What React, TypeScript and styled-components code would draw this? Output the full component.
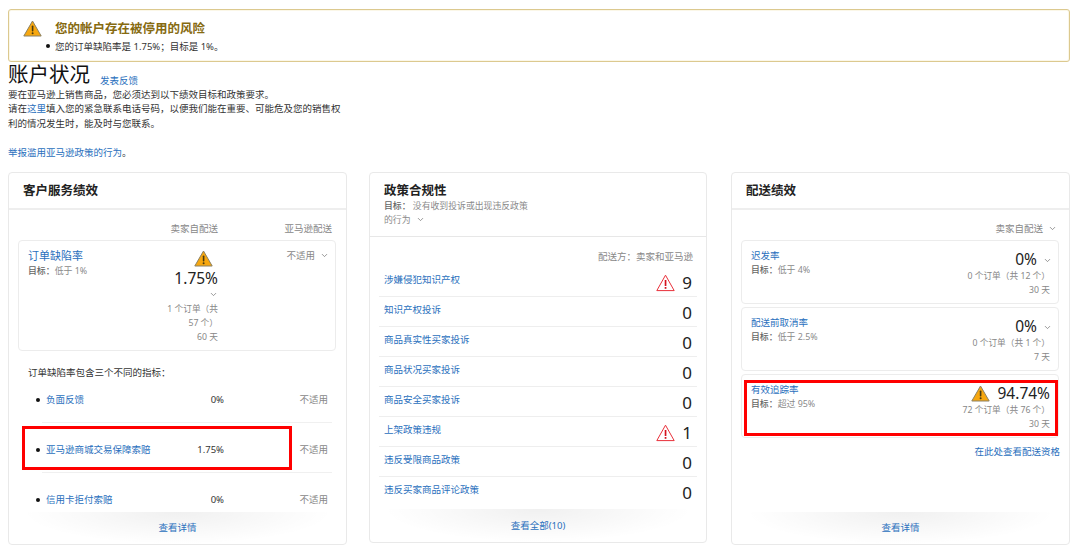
import { ChevronDown } from "lucide-react";
import styled, { createGlobalStyle } from "styled-components";

const GlobalStyle = createGlobalStyle`
  html, body {
    margin: 0;
    height: 545px;
    overflow: hidden;
    background: #fff;
  }
  body {
    font-family: "Noto Sans", "Noto Sans CJK SC", sans-serif;
    font-size: 9.5px;
    line-height: 14px;
    color: #333;
  }
  * {
    box-sizing: border-box;
  }
`;

function WarnIcon() {
  return (
    <svg width="19" height="17" viewBox="0 0 19 17">
      <path d="M9.5 1 L18.2 16 H0.8 Z" fill="#f7a70f" stroke="#8b8062" strokeWidth="1" strokeLinejoin="round" />
      <rect x="8.8" y="5.6" width="1.6" height="5.8" rx="0.7" fill="#4a3a10" />
      <circle cx="9.6" cy="13.3" r="1" fill="#4a3a10" />
    </svg>
  );
}

function AlertIcon() {
  return (
    <svg width="19" height="18" viewBox="0 0 19 18">
      <path d="M9.5 1.2 L18.2 16.6 H0.8 Z" fill="#fff" stroke="#e8303a" strokeWidth="1" strokeLinejoin="round" />
      <rect x="8.7" y="6" width="1.7" height="6" fill="#d5121e" />
      <rect x="8.7" y="13" width="1.7" height="1.8" fill="#d5121e" />
    </svg>
  );
}

const policies = [
  { name: "涉嫌侵犯知识产权", count: 9, alert: true },
  { name: "知识产权投诉", count: 0 },
  { name: "商品真实性买家投诉", count: 0 },
  { name: "商品状况买家投诉", count: 0 },
  { name: "商品安全买家投诉", count: 0 },
  { name: "上架政策违规", count: 1, alert: true },
  { name: "违反受限商品政策", count: 0 },
  { name: "违反买家商品评论政策", count: 0 },
];

const shipping = [
  { name: "迟发率", goal: "低于 4%", value: "0%", orders: "0 个订单\uFF08共 12 个\uFF09", days: "30 天" },
  { name: "配送前取消率", goal: "低于 2.5%", value: "0%", orders: "0 个订单\uFF08共 1 个\uFF09", days: "7 天" },
  { name: "有效追踪率", goal: "超过 95%", value: "94.74%", orders: "72 个订单\uFF08共 76 个\uFF09", days: "30 天", warn: true },
];

const metrics = [
  { name: "负面反馈", value: "0%" },
  { name: "亚马逊商城交易保障索赔", value: "1.75%", marked: true },
  { name: "信用卡拒付索赔", value: "0%" },
];

export default function App() {
  return (
    <Page>
      <GlobalStyle />
      <Banner>
        <BannerIcon>
          <WarnIcon />
        </BannerIcon>
        <div>
          <BannerTitle>您的帐户存在被停用的风险</BannerTitle>
          <BannerItem>您的订单缺陷率是 1.75%&#xFF1B;目标是 1%。</BannerItem>
        </div>
      </Banner>

      <TitleRow>
        <PageTitle>账户状况</PageTitle>
        <Link href="#">发表反馈</Link>
      </TitleRow>
      <Intro>
        要在亚马逊上销售商品&#xFF0C;您必须达到以下绩效目标和政策要求。
        <br />
        请在<Link href="#">这里</Link>填入您的紧急联系电话号码&#xFF0C;以便我们能在重要、可能危及您的销售权
        <br />
        利的情况发生时&#xFF0C;能及时与您联系。
      </Intro>
      <Report>
        <Link href="#">举报滥用亚马逊政策的行为</Link>。
      </Report>

      <Cards>
        <Card>
          <CardHead $thick>
            <CardTitle>客户服务绩效</CardTitle>
          </CardHead>
          <ServiceBody>
            <ColumnHeads>
              <span />
              <Muted>卖家自配送</Muted>
              <Muted>亚马逊配送</Muted>
            </ColumnHeads>
            <DefectBox>
              <div>
                <BigLink href="#">订单缺陷率</BigLink>
                <Goal>
                  <b>目标&#xFF1A;</b>低于 1%
                </Goal>
              </div>
              <DefectValue>
                <DefectIcon>
                  <WarnIcon />
                </DefectIcon>
                <Figure>1.75%</Figure>
                <DefectChevron>
                  <ChevronDown size={9} />
                </DefectChevron>
                <OrderLine>1 个订单&#xFF08;共</OrderLine>
                <OrderLine>57 个&#xFF09;</OrderLine>
                <OrderLine>60 天</OrderLine>
              </DefectValue>
              <DefectAmazon>
                <Muted>不适用</Muted>
                <ChevronDown size={9} />
              </DefectAmazon>
            </DefectBox>
            <ListIntro>订单缺陷率包含三个不同的指标&#xFF1A;</ListIntro>
            <MetricList>
              {metrics.map((m) => (
                <Metric key={m.name}>
                  <div>
                    <Dot />
                    <Link href="#">{m.name}</Link>
                  </div>
                  <RightText>{m.value}</RightText>
                  <Muted>不适用</Muted>
                  {m.marked && <MetricMark />}
                </Metric>
              ))}
            </MetricList>
          </ServiceBody>
          <CardFoot $tall>
            <Link href="#">查看详情</Link>
          </CardFoot>
        </Card>

        <PolicyCard>
          <CardHead>
            <CardTitle>政策合规性</CardTitle>
            <PolicyGoal>
              <b>目标&#xFF1A;</b>&nbsp;没有收到投诉或出现违反政策
              <br />
              的行为 <ChevronDown size={9} />
            </PolicyGoal>
          </CardHead>
          <PolicyBody>
            <PolicyNote>配送方&#xFF1A;卖家和亚马逊</PolicyNote>
            {policies.map((p) => (
              <PolicyRow key={p.name}>
                <Link href="#">{p.name}</Link>
                <PolicyCount>
                  {p.alert && <AlertIcon />}
                  <CountNumber>{p.count}</CountNumber>
                </PolicyCount>
              </PolicyRow>
            ))}
          </PolicyBody>
          <CardFoot>
            <Link href="#">查看全部(10)</Link>
          </CardFoot>
        </PolicyCard>

        <Card>
          <CardHead $thick>
            <CardTitle>配送绩效</CardTitle>
          </CardHead>
          <ShippingBody>
            <ShippingNote>
              <Muted>卖家自配送</Muted>
              <ChevronDown size={9} />
            </ShippingNote>
            {shipping.map((s) => (
              <ShipBox key={s.name}>
                <div>
                  <Link href="#">{s.name}</Link>
                  <Goal>
                    <b>目标&#xFF1A;</b>
                    {s.goal}
                  </Goal>
                </div>
                <ShipNumbers>
                  <ShipFigure>
                    {s.warn && <WarnIcon />}
                    <Figure>{s.value}</Figure>
                    {!s.warn && <ChevronDown size={9} />}
                  </ShipFigure>
                  <OrderLine>{s.orders}</OrderLine>
                  <OrderLine>{s.days}</OrderLine>
                </ShipNumbers>
                {s.warn && <ShipMark />}
              </ShipBox>
            ))}
            <Eligibility>
              <Link href="#">在此处查看配送资格</Link>
            </Eligibility>
          </ShippingBody>
          <CardFoot $tall>
            <Link href="#">查看详情</Link>
          </CardFoot>
        </Card>
      </Cards>
    </Page>
  );
}

const Page = styled.div`
  width: 1080px;
  padding: 9px 10px 0 8px;
`;
const Banner = styled.div`
  display: flex;
  height: 53px;
  padding: 9px 0 0 14px;
  border: 1px solid #dcc98f;
  border-radius: 3px;
  box-shadow: inset 0 0 0 1px #fbf7e8;
`;
const BannerIcon = styled.div`
  width: 32px;
  padding-top: 1px;
`;
const BannerTitle = styled.div`
  font-size: 12.5px;
  font-weight: 700;
  line-height: 20px;
  color: #866a10;
`;
const BannerItem = styled.div`
  position: relative;
  line-height: 15px;
  &::before {
    content: "";
    position: absolute;
    left: -9px;
    top: 5px;
    width: 4px;
    height: 4px;
    border-radius: 50%;
    background: #111;
  }
`;
const TitleRow = styled.div`
  display: flex;
  align-items: flex-end;
  gap: 10px;
  height: 26px;
`;
const PageTitle = styled.h1`
  margin: 0;
  font-size: 20.5px;
  font-weight: 400;
  line-height: 28px;
  color: #111;
`;
const Link = styled.a`
  color: #2a70bd;
  text-decoration: none;
`;
const Intro = styled.div`
  width: 345px;
  line-height: 14.4px;
  white-space: nowrap;
`;
const Report = styled.div`
  margin-top: 14px;
  line-height: 15px;
`;
const Cards = styled.div`
  display: grid;
  grid-template-columns: 339px 340px 339px;
  align-items: start;
  column-gap: 22px;
  margin-top: 12px;
`;
const Card = styled.section`
  display: flex;
  flex-direction: column;
  height: 373px;
  border: 1px solid #e9e9e9;
  border-radius: 4px;
`;
const PolicyCard = styled(Card)`
  width: 338px;
  height: 371px;
`;
const CardHead = styled.header<{ $thick?: boolean }>`
  padding: 10px 14px 9px;
  border-bottom: ${(p) => (p.$thick ? "2px solid #eeeeee" : "1px solid #e7e7e7")};
`;
const CardTitle = styled.h2`
  margin: 0;
  font-size: 12.5px;
  font-weight: 700;
  line-height: 16px;
  color: #222;
`;
const PolicyGoal = styled.div`
  font-size: 8.85px;
  color: #8a8a8a;
  b {
    font-weight: 500;
    color: #666;
  }
  svg {
    margin: 0 0 -1px 3px;
    color: #777;
  }
`;
const Muted = styled.div`
  color: #888;
  text-align: right;
`;
const OrderLine = styled(Muted)`
  font-size: 8.7px;
`;
const ServiceBody = styled.div`
  flex: 1;
  padding: 12px 10px 0 9px;
`;
const ColumnHeads = styled.div`
  display: grid;
  grid-template-columns: 1fr 80px 114px;
  margin-right: 4px;
`;
const DefectBox = styled.div`
  display: grid;
  grid-template-columns: 1fr 80px 117px;
  height: 111px;
  margin-top: 4px;
  padding: 8px 0 0 9px;
  border: 1px solid #ececec;
  border-radius: 4px;
`;
const BigLink = styled(Link)`
  font-size: 11px;
`;
const Goal = styled.div`
  font-size: 8.9px;
  color: #8a8a8a;
  b {
    font-weight: 500;
    color: #666;
  }
`;
const DefectValue = styled.div`
  display: flex;
  flex-direction: column;
  align-items: flex-end;
  margin-top: 1px;
`;
const DefectIcon = styled.div`
  height: 18px;
  margin-right: 5px;
`;
const Figure = styled.div`
  font-size: 15.5px;
  line-height: 20px;
  color: #222;
`;
const DefectChevron = styled.div`
  height: 14px;
  padding-top: 1px;
  color: #777;
`;
const DefectAmazon = styled.div`
  display: flex;
  justify-content: flex-end;
  gap: 5px;
  padding-right: 6px;
  height: 14px;
  svg {
    margin-top: 2px;
    color: #777;
  }
`;
const ListIntro = styled.div`
  margin: 15px 0 0 10px;
`;
const MetricList = styled.div`
  margin: 0 4px 0 24px;
`;
const Metric = styled.div`
  position: relative;
  display: grid;
  grid-template-columns: 1fr 60px 104px;
  height: 50px;
  padding: 20px 4px 0 0;
  border-bottom: 1px solid #f0f0f0;
  &:first-child {
    height: 43px;
    padding-top: 13px;
  }
  &:last-child {
    border-bottom: 0;
    height: 34px;
  }
`;
const Dot = styled.span`
  display: inline-block;
  width: 4px;
  height: 4px;
  margin: 0 6px 1px -6px;
  border-radius: 50%;
  background: #111;
`;
const RightText = styled.div`
  text-align: right;
`;
const MetricMark = styled.div`
  position: absolute;
  left: -20px;
  top: 3px;
  width: 270px;
  height: 44px;
  border: 3px solid #f00;
`;
const CardFoot = styled.footer<{ $tall?: boolean }>`
  height: ${(p) => (p.$tall ? "32px" : "33px")};
  display: flex;
  align-items: center;
  justify-content: center;
  background: radial-gradient(ellipse 46% 100% at 50% 0, rgba(0, 0, 0, 0.06), rgba(0, 0, 0, 0) 100%);
  border-radius: 0 0 4px 4px;
`;
const PolicyBody = styled.div`
  flex: 1;
  padding: 13px 9px 0 9px;
`;
const PolicyNote = styled(Muted)`
  padding-right: 4px;
  margin-bottom: 3px;
`;
const PolicyRow = styled.div`
  display: flex;
  justify-content: space-between;
  height: 30px;
  padding: 6px 5px 0;
  border-bottom: 1px solid #eeeeee;
  &:last-child {
    border-bottom: 0;
  }
`;
const PolicyCount = styled.div`
  display: flex;
  align-items: center;
  gap: 7px;
  height: 22px;
  margin-top: -1px;
`;
const CountNumber = styled.span`
  font-size: 17px;
  line-height: 22px;
  color: #222;
`;
const ShippingBody = styled.div`
  flex: 1;
  padding: 12px 10px 0 9px;
`;
const ShippingNote = styled.div`
  display: flex;
  justify-content: flex-end;
  gap: 5px;
  height: 14px;
  padding-right: 2px;
  margin-bottom: 4px;
  svg {
    margin-top: 2px;
    color: #777;
  }
`;
const ShipBox = styled.div`
  position: relative;
  display: flex;
  justify-content: space-between;
  height: 64px;
  margin-bottom: 3px;
  padding: 8px 8px 0 9px;
  border: 1px solid #ececec;
  border-radius: 4px;
`;
const ShipNumbers = styled.div`
  display: flex;
  flex-direction: column;
  align-items: flex-end;
`;
const ShipFigure = styled.div`
  display: flex;
  align-items: center;
  gap: 8px;
  height: 20px;
  svg:last-child {
    color: #777;
    margin: 2px -2px 0 -2px;
  }
`;
const ShipMark = styled.div`
  position: absolute;
  left: 2px;
  top: 5px;
  width: 314px;
  height: 56px;
  border: 3px solid #f00;
`;
const Eligibility = styled.div`
  margin: 7px -1px 0 0;
  text-align: right;
`;
